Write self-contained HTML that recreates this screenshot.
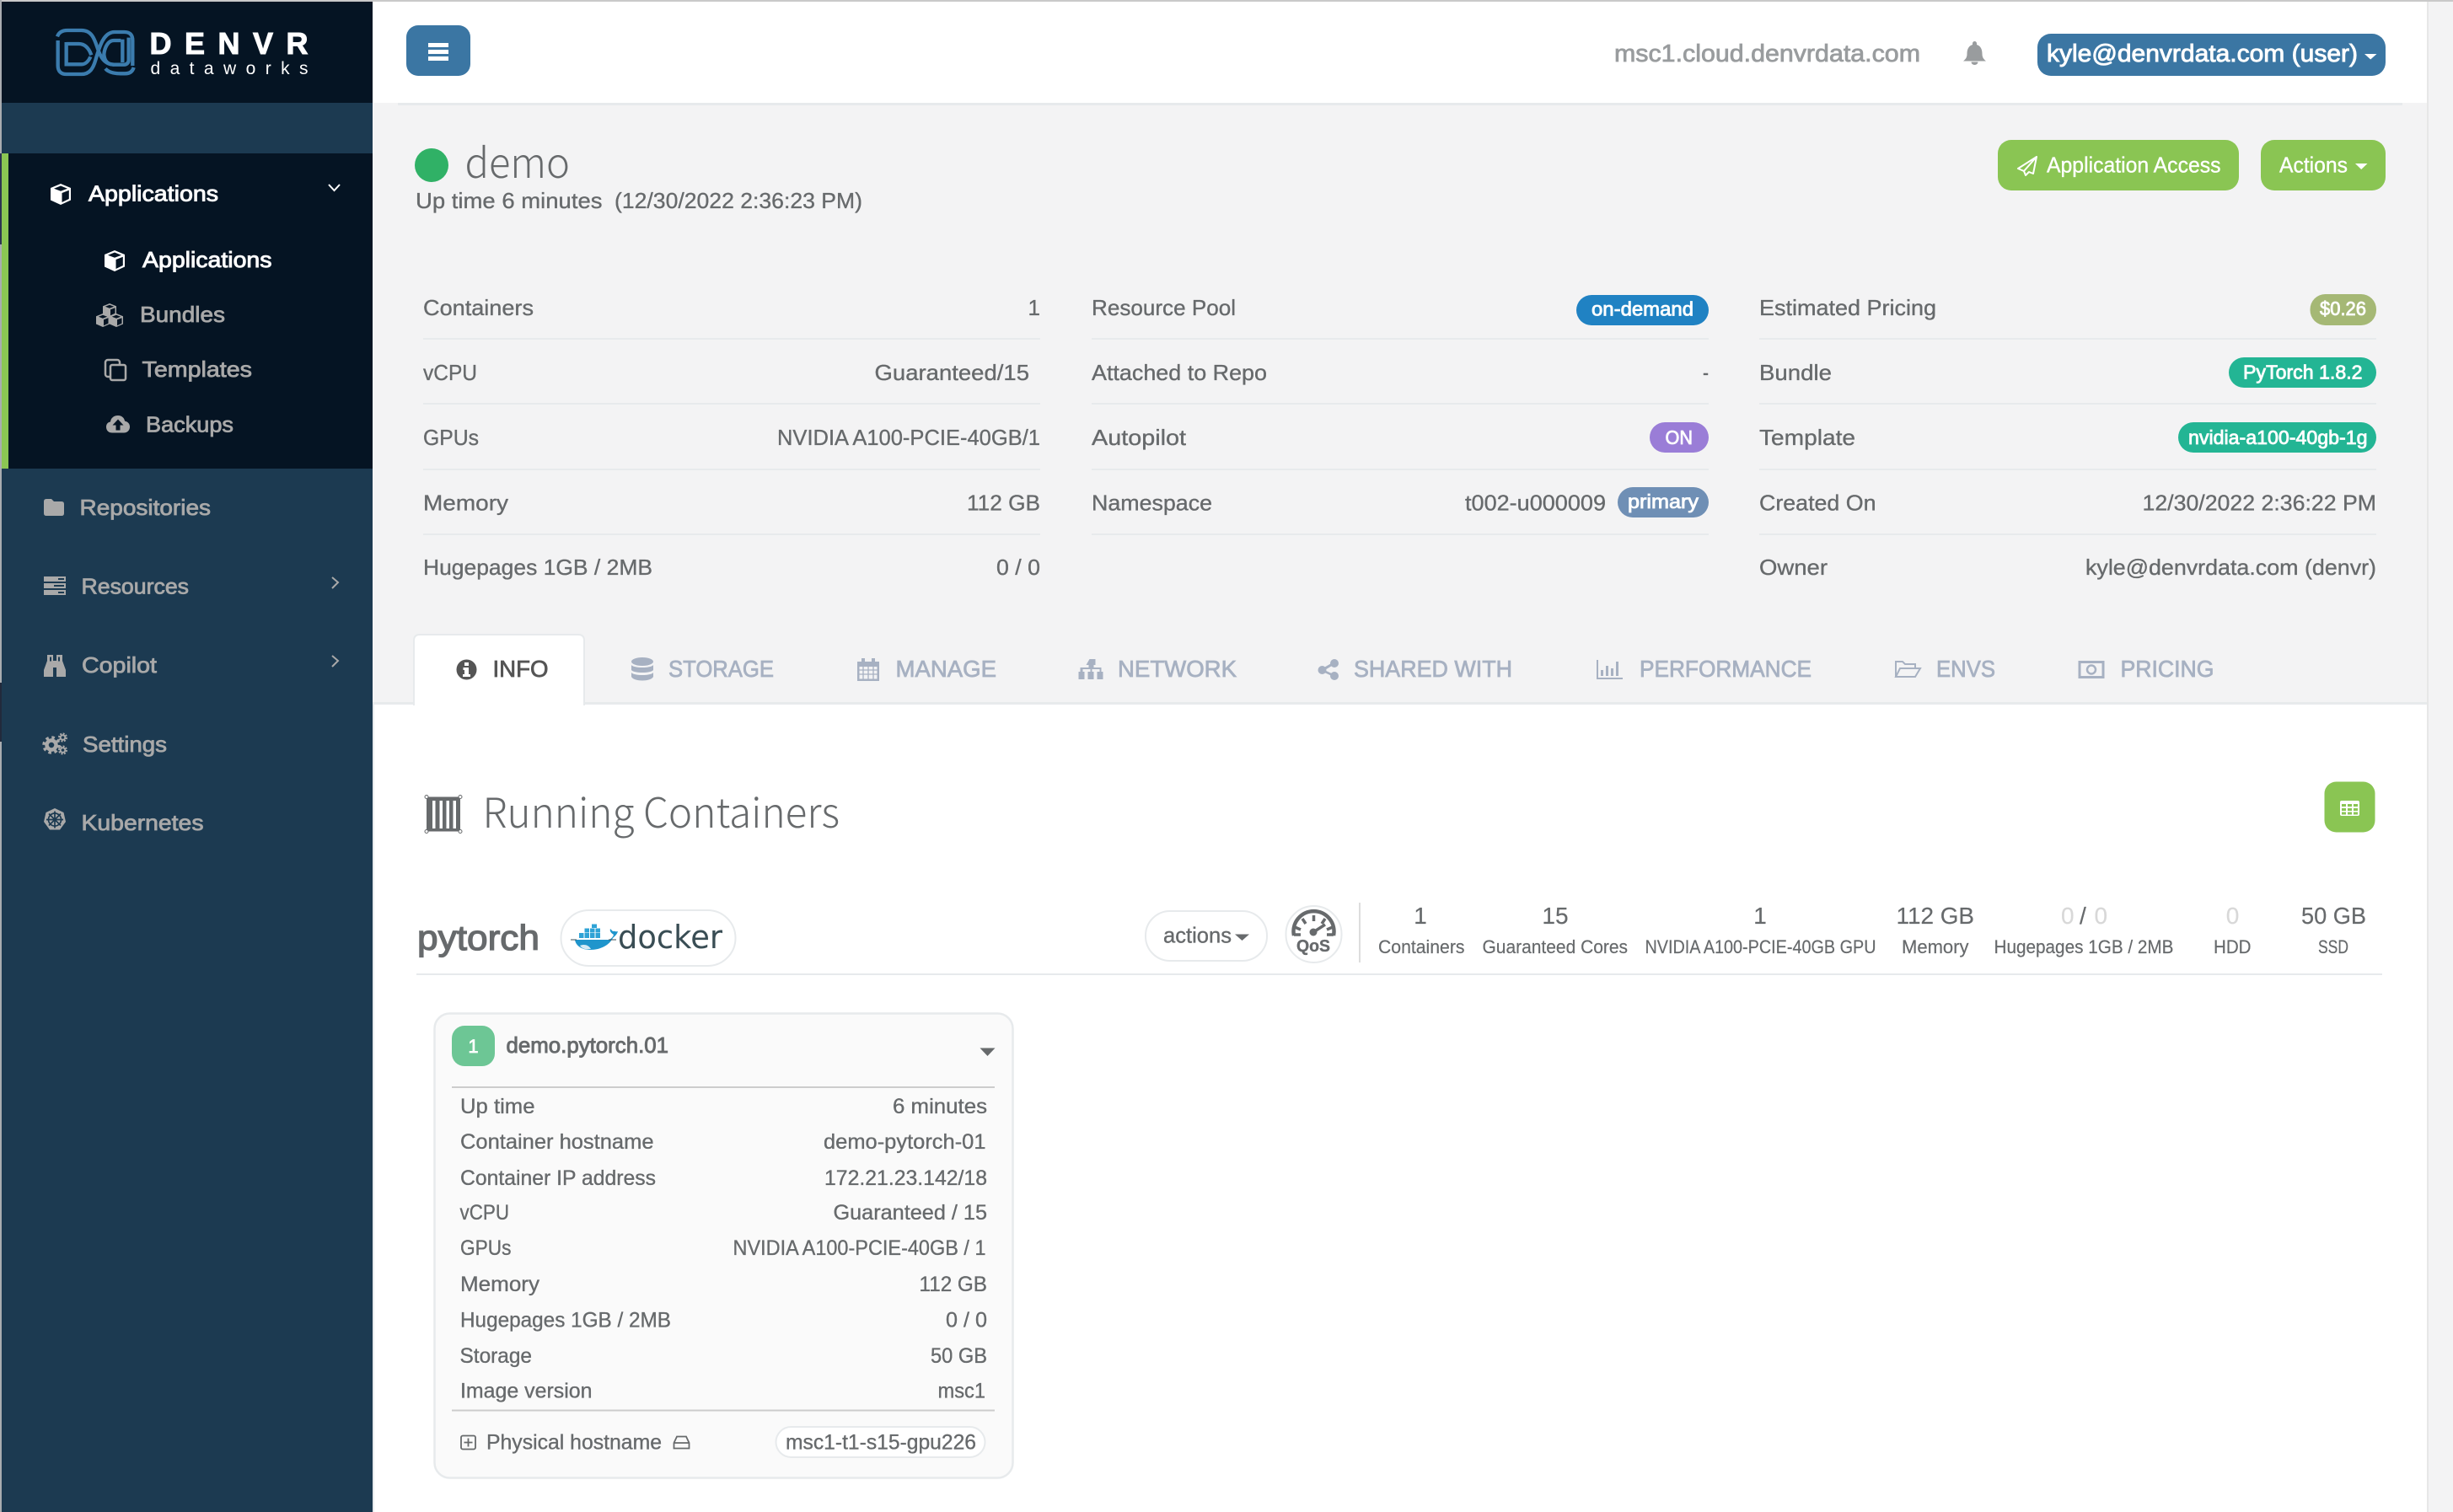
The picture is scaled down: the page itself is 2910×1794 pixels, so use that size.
<!DOCTYPE html>
<html><head><meta charset="utf-8"><title>demo</title>
<style>
html,body{margin:0;padding:0;background:#f3f3f4;width:2910px;height:1794px;overflow:hidden}
svg{display:block}
text{font-family:"Liberation Sans",sans-serif;font-size:26px;fill:#676a6c;stroke:#676a6c;stroke-width:.35px}
.w{fill:#fff;stroke:#fff;stroke-width:.9px}
.g{fill:#a9a9a9;stroke:#a9a9a9;stroke-width:.8px;font-size:26px}
.t{fill:#a7b1c2;stroke:#a7b1c2;stroke-width:.8px;font-size:28px}
.p{fill:#fff;stroke:#fff;stroke-width:.8px;font-size:23px}
.c{font-size:25px}
.l{font-size:22px;stroke-width:.2px}
.n{font-size:28px;stroke-width:.2px}
.z{fill:#d8d8d8;stroke:#d8d8d8}
.h{font-family:"Noto Sans CJK JP","Liberation Sans",sans-serif;font-weight:300;font-size:49px;fill:#676a6c;stroke:none}
</style></head><body>
<svg xmlns="http://www.w3.org/2000/svg" width="2910" height="1794" viewBox="0 0 2910 1794">
<defs>
<g id="cube"><path fill="#fff" d="M12 0L24 5V19.500L12 25L0 19.500V5Z"/><path fill="#051423" d="M12 2.500L20 5.700L12 8.800L4 5.700Z"/><path fill="#051423" d="M13.500 11L21.800 7.800V18L13.500 22Z"/></g>
<g id="cubeg"><path fill="#a9a9a9" d="M8 0L16 3.300V12.500L8 16L0 12.500V3.300Z"/><path fill="#051423" d="M8 1.700L13.200 3.800L8 5.800L2.800 3.800Z"/><path fill="#051423" d="M9 7.200L14.500 5.200V11.800L9 14.300Z"/></g>
</defs>
<!-- backgrounds -->
<rect width="2910" height="1794" fill="#f3f3f4"/>
<rect x="442" y="2" width="2438" height="120" fill="#fff"/>
<rect x="472" y="122" width="2378" height="3" fill="#e7eaec"/>
<rect x="2879" y="2" width="2" height="1792" fill="#e7e7e7"/>
<rect x="444" y="836" width="2435" height="958" fill="#fff"/>
<rect x="442" y="833" width="2437" height="3" fill="#e7eaec"/>
<rect x="442" y="836" width="2" height="958" fill="#e7eaec"/>
<rect y="0" width="2910" height="2" fill="#c9c9c9"/>
<rect y="0" width="2" height="1794" fill="#a9acb0"/>
<rect y="182" width="2" height="108" fill="#2c3450"/>
<rect y="810" width="2" height="70" fill="#222a3c"/>
<!-- sidebar -->
<rect x="2" y="2" width="440" height="1792" fill="#1c3a51"/>
<rect x="2" y="2" width="440" height="120" fill="#051423"/>
<rect x="2" y="182" width="440" height="374" fill="#051423"/>
<rect x="2" y="182" width="8" height="374" fill="#8bc653"/>
<!-- logo -->
<g transform="translate(60,28) scale(.3333)" fill="none" stroke="#3b7cae" stroke-width="13" stroke-linecap="butt">
<path d="M26 60V150C26 170 38 180 56 180H110C140 180 152 158 160 130C172 90 186 30 228 30H262C284 30 292 42 292 60V150"/>
<path d="M24 46C30 30 42 24 60 24H110C146 24 156 54 166 84C176 116 190 146 226 146H262C270 146 278 140 278 130V50"/>
<path d="M195 160C205 172 225 178 250 178H265C282 178 292 170 296 156"/>
<path d="M56 66V145H110C125 145 136 132 142 118"/>
<path d="M56 72H100C125 72 138 92 145 112"/>
<path d="M250 60H225C205 60 192 85 190 110C192 130 200 146 226 146"/>
<path d="M256 56V138"/>
</g>
<text x="177.500" y="64" textLength="188" lengthAdjust="spacing" style="font-size:36px;font-weight:700;fill:#fff;stroke:#fff;stroke-width:1px">DENVR</text>
<text x="178.500" y="88" textLength="187" lengthAdjust="spacing" style="font-size:21px;fill:#fff;stroke:none">dataworks</text>
<!-- sidebar items -->
<use href="#cube" x="60" y="218"/>
<text class="w" x="105" y="238.500" textLength="154" lengthAdjust="spacingAndGlyphs">Applications</text>
<path d="M390 219L396.500 226L403 219" fill="none" stroke="#fff" stroke-width="2"/>
<use href="#cube" x="124" y="297"/>
<text class="w" x="169" y="317" textLength="153.500" lengthAdjust="spacingAndGlyphs">Applications</text>
<use href="#cubeg" x="122" y="360"/><use href="#cubeg" x="114" y="372"/><use href="#cubeg" x="130" y="372"/>
<text class="g" x="166" y="382" textLength="101" lengthAdjust="spacingAndGlyphs">Bundles</text>
<rect x="125" y="427" width="17" height="20" rx="3" fill="none" stroke="#a9a9a9" stroke-width="2.500"/>
<rect x="131" y="433" width="18" height="18" rx="2" fill="#051423" stroke="#a9a9a9" stroke-width="2.500"/>
<text class="g" x="168.500" y="447" textLength="130.500" lengthAdjust="spacingAndGlyphs">Templates</text>
<path fill="#a9a9a9" d="M133 513.500C128 513.500 126 510 126 506.500C126 503 128 501 131 500.500C131.500 496 135 493 140 493C144.500 493 147.500 496 148 499.500C152 500.500 154 503 154 506.500C154 510.500 151 513.500 147 513.500Z"/>
<path fill="#051423" d="M140 497.500L146.500 504.500H142.500V510.500H137.500V504.500H133.500Z"/>
<text class="g" x="173" y="512.500" textLength="104" lengthAdjust="spacingAndGlyphs">Backups</text>
<path fill="#a9a9a9" d="M52 595Q52 592 55 592H61L64 595H73Q76 595 76 598V609Q76 612 73 612H55Q52 612 52 609Z"/>
<text class="g" x="94.500" y="611" textLength="155.500" lengthAdjust="spacingAndGlyphs">Repositories</text>
<g fill="#a9a9a9"><rect x="52" y="684" width="26" height="6"/><rect x="52" y="692" width="26" height="6"/><rect x="52" y="700" width="26" height="6"/></g>
<g fill="#1c3a51"><rect x="69" y="686" width="7" height="2"/><rect x="64" y="694" width="12" height="2"/><rect x="69" y="702" width="7" height="2"/></g>
<text class="g" x="96.500" y="704.500" textLength="127.500" lengthAdjust="spacingAndGlyphs">Resources</text>
<path d="M394 685L401 691L394 698" fill="none" stroke="#a9a9a9" stroke-width="2"/>
<path fill="#a9a9a9" d="M56 777H63V784H67V777H74V784L78 795V803H67V792H63V803H52V795L56 784Z"/>
<path fill="#1c3a51" d="M59 779.500h2v5h-2zM69 779.500h2v5h-2z"/>
<text class="g" x="97" y="798" textLength="89" lengthAdjust="spacingAndGlyphs">Copilot</text>
<path d="M394 778L401 784L394 791" fill="none" stroke="#a9a9a9" stroke-width="2"/>
<g fill="none" stroke="#a9a9a9">
<circle cx="61" cy="884" r="5.500" stroke-width="4.500"/><circle cx="61" cy="884" r="9" stroke-width="3.500" stroke-dasharray="3.500 3.570"/>
<circle cx="74.500" cy="875" r="2.800" stroke-width="2"/><circle cx="74.500" cy="875" r="4.500" stroke-width="2" stroke-dasharray="2 1.530"/>
<circle cx="74.500" cy="890" r="2.800" stroke-width="2"/><circle cx="74.500" cy="890" r="4.500" stroke-width="2" stroke-dasharray="2 1.530"/>
</g>
<text class="g" x="98" y="892" textLength="100" lengthAdjust="spacingAndGlyphs">Settings</text>
<path fill="#a9a9a9" d="M65 959L75.500 964L78 975L71 984.500H59L52 975L54.500 964Z"/>
<g fill="none" stroke="#1c3a51" stroke-width="1.700"><circle cx="65" cy="972.500" r="7.500"/><path d="M65 962.500V982.500M55 972.500H75M58 965.500L72 979.500M72 965.500L58 979.500"/></g>
<text class="g" x="96.500" y="985" textLength="145" lengthAdjust="spacingAndGlyphs">Kubernetes</text>
<!-- navbar -->
<rect x="482" y="30" width="76" height="60" rx="14" fill="#3b76a3"/>
<g fill="#fff"><rect x="508" y="51" width="24" height="5"/><rect x="508" y="59" width="24" height="5"/><rect x="508" y="67" width="24" height="5"/></g>
<text x="1915" y="73" textLength="363" lengthAdjust="spacingAndGlyphs" style="font-size:29px;fill:#999c9e;stroke:#999c9e;stroke-width:.8px">msc1.cloud.denvrdata.com</text>
<rect x="2417" y="40" width="413" height="50" rx="16" fill="#3b76a3"/>
<text class="w" x="2428" y="73" textLength="369" lengthAdjust="spacingAndGlyphs" style="font-size:29px">kyle@denvrdata.com (user)</text>
<path d="M2805 64H2819.500L2812.200 70.500Z" fill="#fff"/>
<!-- header -->
<circle cx="512" cy="196" r="20" fill="#30b166"/>
<text class="h" x="551.500" y="211" textLength="124.500" lengthAdjust="spacingAndGlyphs">demo</text>
<text x="493" y="247" textLength="221.500" lengthAdjust="spacingAndGlyphs">Up time 6 minutes</text>
<text x="729" y="247" textLength="294" lengthAdjust="spacingAndGlyphs">(12/30/2022 2:36:23 PM)</text>
<rect x="2370" y="166" width="286" height="60" rx="16" fill="#8ac553"/>
<path d="M2416 186L2394 200L2401 203L2403 208L2407 204L2412 206ZM2416 186L2401 203" fill="none" stroke="#fff" stroke-width="2" stroke-linejoin="round"/>
<text x="2428" y="204.500" textLength="206.500" lengthAdjust="spacingAndGlyphs" style="fill:#fff;stroke:#fff">Application Access</text>
<rect x="2682" y="166" width="148" height="60" rx="16" fill="#8ac553"/>
<text x="2704" y="204.500" textLength="81" lengthAdjust="spacingAndGlyphs" style="fill:#fff;stroke:#fff">Actions</text>
<path d="M2794 194H2808.500L2801.200 201Z" fill="#fff"/>
<!-- info table lines -->
<g fill="#e7eaec">
<rect x="502" y="401" width="732" height="2"/><rect x="502" y="478" width="732" height="2"/><rect x="502" y="556" width="732" height="2"/><rect x="502" y="633" width="732" height="2"/>
<rect x="1295" y="401" width="732" height="2"/><rect x="1295" y="478" width="732" height="2"/><rect x="1295" y="556" width="732" height="2"/><rect x="1295" y="633" width="732" height="2"/>
<rect x="2087" y="401" width="732" height="2"/><rect x="2087" y="478" width="732" height="2"/><rect x="2087" y="556" width="732" height="2"/><rect x="2087" y="633" width="732" height="2"/>
</g>
<text x="502" y="374" textLength="131" lengthAdjust="spacingAndGlyphs">Containers</text>
<text x="502" y="451" textLength="64" lengthAdjust="spacingAndGlyphs">vCPU</text>
<text x="502" y="528" textLength="66" lengthAdjust="spacingAndGlyphs">GPUs</text>
<text x="502" y="605.500" textLength="101" lengthAdjust="spacingAndGlyphs">Memory</text>
<text x="502" y="682" textLength="272" lengthAdjust="spacingAndGlyphs">Hugepages 1GB / 2MB</text>
<text x="1234" y="374" text-anchor="end">1</text>
<text x="1037.500" y="451" textLength="183.500" lengthAdjust="spacingAndGlyphs">Guaranteed/15</text>
<text x="922" y="528" textLength="312" lengthAdjust="spacingAndGlyphs">NVIDIA A100-PCIE-40GB/1</text>
<text x="1147" y="605.500" textLength="87" lengthAdjust="spacingAndGlyphs">112 GB</text>
<text x="1182" y="682" textLength="52" lengthAdjust="spacingAndGlyphs">0 / 0</text>
<text x="1295" y="374" textLength="171" lengthAdjust="spacingAndGlyphs">Resource Pool</text>
<text x="1295" y="451" textLength="208" lengthAdjust="spacingAndGlyphs">Attached to Repo</text>
<text x="1295" y="528" textLength="112" lengthAdjust="spacingAndGlyphs">Autopilot</text>
<text x="1295" y="605.500" textLength="143" lengthAdjust="spacingAndGlyphs">Namespace</text>
<rect x="1870" y="350" width="157" height="36" rx="18" fill="#2082c3"/>
<text class="p" x="1888" y="374.500" textLength="121" lengthAdjust="spacingAndGlyphs">on-demand</text>
<text x="2020" y="451" textLength="7" lengthAdjust="spacingAndGlyphs">-</text>
<rect x="1957" y="501" width="70" height="36" rx="18" fill="#9a7dd7"/>
<text class="p" x="1975.500" y="527" textLength="32.500" lengthAdjust="spacingAndGlyphs">ON</text>
<text x="1738" y="605.500" textLength="167" lengthAdjust="spacingAndGlyphs">t002-u000009</text>
<rect x="1919" y="578" width="108" height="36" rx="18" fill="#6f8fb5"/>
<text class="p" x="1931" y="603" textLength="84" lengthAdjust="spacingAndGlyphs">primary</text>
<text x="2087" y="374" textLength="210" lengthAdjust="spacingAndGlyphs">Estimated Pricing</text>
<text x="2087" y="451" textLength="86" lengthAdjust="spacingAndGlyphs">Bundle</text>
<text x="2087" y="528" textLength="114" lengthAdjust="spacingAndGlyphs">Template</text>
<text x="2087" y="605.500" textLength="138.500" lengthAdjust="spacingAndGlyphs">Created On</text>
<text x="2087" y="682" textLength="81" lengthAdjust="spacingAndGlyphs">Owner</text>
<rect x="2740.500" y="349" width="78.500" height="37" rx="18" fill="#a5b875"/>
<text class="p" x="2752" y="374" textLength="55" lengthAdjust="spacingAndGlyphs">$0.26</text>
<rect x="2644" y="424" width="175" height="36" rx="18" fill="#23b594"/>
<text class="p" x="2661" y="449.500" textLength="141.500" lengthAdjust="spacingAndGlyphs">PyTorch 1.8.2</text>
<rect x="2584" y="501" width="235" height="36" rx="18" fill="#23b594"/>
<text class="p" x="2596" y="527" textLength="212.500" lengthAdjust="spacingAndGlyphs">nvidia-a100-40gb-1g</text>
<text x="2541.500" y="605.500" textLength="277.500" lengthAdjust="spacingAndGlyphs">12/30/2022 2:36:22 PM</text>
<text x="2474" y="682" textLength="345" lengthAdjust="spacingAndGlyphs">kyle@denvrdata.com (denvr)</text>
<!-- tabs -->
<path d="M491 836V760Q491 753 498 753H686Q693 753 693 760V836Z" fill="#fff" stroke="#e7eaec" stroke-width="2"/>
<rect x="492" y="832" width="200" height="6" fill="#fff"/>
<circle cx="553.500" cy="794.500" r="12" fill="#555"/>
<path fill="#fff" d="M551 786h5v4h-5zM549.500 792h6.500v8h2v3h-9v-3h2v-5h-1.500z"/>
<text x="584.500" y="803" textLength="66" lengthAdjust="spacingAndGlyphs" style="font-size:28px;fill:#555;stroke:#555;stroke-width:.8px">INFO</text>
<g fill="#a7b1c2">
<ellipse cx="762" cy="785" rx="13" ry="5"/><path d="M749 789C752 793 772 793 775 789V795C772 799 752 799 749 795ZM749 798C752 802 772 802 775 798V803C772 809 752 809 749 803Z"/>
<path d="M1017 785H1022V781H1026V785H1034V781H1038V785H1043V808H1017ZM1019.500 791V805.500H1040.500V791Z"/><g stroke="#a7b1c2" stroke-width="1.300"><path d="M1019 795H1041M1019 800H1041M1024 791V806M1030 791V806M1036 791V806"/></g>
<path transform="translate(1.500,0)" d="M1291 782h7v7h-2v3h9v5h2v9h-7v-9h3v-3h-9v3h2v9h-7v-9h3v-3h-9v3h2v9h-7v-9h2v-5h10v-3h-3z"/>
<circle cx="1583" cy="787" r="5"/><circle cx="1568.500" cy="795" r="5"/><circle cx="1583" cy="802" r="5"/><path d="M1568 793.500L1582 785.500L1583.500 788L1570 796ZM1569 794L1583 800.500L1582 803L1568 796.500Z"/>
<path d="M1894 783h2v21h29v2h-31zM1899 795h3v7h-3zM1905 790h3v12h-3zM1911 793h3v9h-3zM1917 785h3v17h-3z"/>
</g>
<g fill="none" stroke="#a7b1c2" stroke-width="2">
<path d="M2249 803V785H2257L2260 788H2272V793M2249 803L2254 793H2278L2272 803Z"/>
<rect x="2467" y="785.500" width="28" height="18" stroke-width="3"/><circle cx="2481" cy="794.500" r="5" stroke-width="2.500"/>
</g>
<text class="t" x="793" y="803" textLength="125" lengthAdjust="spacingAndGlyphs">STORAGE</text>
<text class="t" x="1062.500" y="803" textLength="119.500" lengthAdjust="spacingAndGlyphs">MANAGE</text>
<text class="t" x="1326" y="803" textLength="141" lengthAdjust="spacingAndGlyphs">NETWORK</text>
<text class="t" x="1606" y="803" textLength="188" lengthAdjust="spacingAndGlyphs">SHARED WITH</text>
<text class="t" x="1945" y="803" textLength="204" lengthAdjust="spacingAndGlyphs">PERFORMANCE</text>
<text class="t" x="2297" y="803" textLength="70" lengthAdjust="spacingAndGlyphs">ENVS</text>
<text class="t" x="2515.500" y="803" textLength="111" lengthAdjust="spacingAndGlyphs">PRICING</text>
<!-- running containers -->
<rect x="506" y="945.500" width="40" height="41" fill="#676a6c"/>
<g fill="#fff"><rect x="513" y="950" width="3.500" height="33"/><rect x="521.500" y="950" width="3.500" height="33"/><rect x="529.500" y="950" width="3.500" height="33"/><rect x="537.500" y="950" width="3.500" height="33"/></g>
<g fill="#fff" stroke="#676a6c" stroke-width="1"><circle cx="506" cy="945.500" r="2"/><circle cx="546" cy="945.500" r="2"/><circle cx="506" cy="986.500" r="2"/><circle cx="546" cy="986.500" r="2"/></g>
<text class="h" x="572.500" y="982" textLength="423.500" lengthAdjust="spacingAndGlyphs">Running Containers</text>
<rect x="2757.500" y="927.500" width="60" height="60" rx="14" fill="#8ac553"/>
<rect x="2776" y="950" width="23" height="18" rx="2" fill="#fff"/>
<g fill="#8ac553"><rect x="2778" y="954" width="5" height="3"/><rect x="2785" y="954" width="5" height="3"/><rect x="2792" y="954" width="5" height="3"/><rect x="2778" y="959" width="5" height="3"/><rect x="2785" y="959" width="5" height="3"/><rect x="2792" y="959" width="5" height="3"/><rect x="2778" y="963.500" width="5" height="3"/><rect x="2785" y="963.500" width="5" height="3"/><rect x="2792" y="963.500" width="5" height="3"/></g>
<!-- pytorch row -->
<text x="495" y="1127" textLength="145" lengthAdjust="spacingAndGlyphs" style="font-size:42px;stroke:#676a6c;stroke-width:1.300px">pytorch</text>
<rect x="665.500" y="1080" width="207" height="66" rx="33" fill="#fff" stroke="#e7eaec" stroke-width="2"/>
<path fill="#1f95cc" d="M682 1115H722C725 1114 727 1112 728 1109C725 1107 723 1105 724 1102L727 1105C729 1104 730 1106 733 1105C732 1109 729 1111 727 1113C723 1121 713 1127 700 1127C690 1127 683 1122 682 1115Z"/>
<path fill="#d5eaf4" d="M688 1122C693 1120 698 1121 701 1126C695 1127 691 1126 688 1122Z"/>
<path stroke="#394d54" stroke-width="1" d="M677 1115H684M722 1115H731"/>
<g fill="#2fa3d6"><rect x="687" y="1107" width="5.500" height="6"/><rect x="693.500" y="1107" width="5.500" height="6"/><rect x="700" y="1107" width="5.500" height="6"/><rect x="706.500" y="1107" width="5.500" height="6"/><rect x="693.500" y="1101.500" width="5.500" height="5"/><rect x="700" y="1101.500" width="5.500" height="5"/><rect x="706.500" y="1101.500" width="5.500" height="5"/><rect x="702" y="1096.500" width="6" height="4.500"/></g>
<text x="733" y="1125" textLength="124" lengthAdjust="spacingAndGlyphs" style="font-family:'DejaVu Sans',sans-serif;font-size:38px;fill:#394d54;stroke:none">docker</text>
<rect x="494" y="1155" width="2332" height="2" fill="#e7eaec"/>
<rect x="1359" y="1081" width="144" height="59" rx="29" fill="#fff" stroke="#e7eaec" stroke-width="2"/>
<text x="1380" y="1118.500" textLength="81" lengthAdjust="spacingAndGlyphs">actions</text>
<path d="M1465 1108.500H1482L1473.500 1116Z" fill="#676a6c"/>
<rect x="1525.500" y="1075" width="66" height="67" rx="33" fill="#fff" stroke="#e7eaec" stroke-width="2"/>
<path d="M1535 1110A24 24 0 1 1 1582 1110" fill="none" stroke="#676a6c" stroke-width="4.500"/>
<path d="M1558.500 1086V1093M1545 1090L1549 1096M1572 1090L1568 1096M1536 1100L1543 1103M1581 1100L1574 1103M1535 1109H1543M1582 1109H1574" stroke="#676a6c" stroke-width="3.500" fill="none"/>
<circle cx="1558" cy="1106" r="4.500" fill="#676a6c"/><path d="M1558 1106L1572 1097" stroke="#676a6c" stroke-width="3.500"/>
<text x="1538" y="1129" textLength="40" lengthAdjust="spacingAndGlyphs" style="font-size:20px;font-weight:700">QoS</text>
<rect x="1612" y="1071" width="2" height="71" fill="#ddd"/>
<text class="n" x="1685" y="1096" text-anchor="middle">1</text>
<text class="n" x="1845" y="1096" text-anchor="middle">15</text>
<text class="n" x="2088" y="1096" text-anchor="middle">1</text>
<text class="n" x="2249.500" y="1096" textLength="92.500" lengthAdjust="spacingAndGlyphs">112 GB</text>
<text class="n z" x="2445" y="1096">0</text>
<text class="n" x="2467" y="1096">/</text>
<text class="n z" x="2484.500" y="1096">0</text>
<text class="n z" x="2648.500" y="1096" text-anchor="middle">0</text>
<text class="n" x="2730" y="1096" textLength="77" lengthAdjust="spacingAndGlyphs">50 GB</text>
<text class="l" x="1635" y="1131" textLength="102.500" lengthAdjust="spacingAndGlyphs">Containers</text>
<text class="l" x="1758.500" y="1131" textLength="172.500" lengthAdjust="spacingAndGlyphs">Guaranteed Cores</text>
<text class="l" x="1951.500" y="1131" textLength="274" lengthAdjust="spacingAndGlyphs">NVIDIA A100-PCIE-40GB GPU</text>
<text class="l" x="2256" y="1131" textLength="79.500" lengthAdjust="spacingAndGlyphs">Memory</text>
<text class="l" x="2365.500" y="1131" textLength="213" lengthAdjust="spacingAndGlyphs">Hugepages 1GB / 2MB</text>
<text class="l" x="2626" y="1131" textLength="44.500" lengthAdjust="spacingAndGlyphs">HDD</text>
<text class="l" x="2750" y="1131" textLength="36" lengthAdjust="spacingAndGlyphs">SSD</text>
<!-- card -->
<rect x="515.500" y="1202.500" width="686" height="551" rx="18" fill="#fafafa" stroke="#e7eaec" stroke-width="2.500"/>
<rect x="536" y="1217" width="51" height="48" rx="15" fill="#6dc695"/>
<text x="561.500" y="1249" text-anchor="middle" style="fill:#fff;font-size:22px;stroke:#fff;stroke-width:.7px">1</text>
<text x="600.500" y="1249" textLength="192.500" lengthAdjust="spacingAndGlyphs" style="font-size:26px;stroke:#676a6c;stroke-width:.9px">demo.pytorch.01</text>
<path d="M1162.500 1243.500H1180.500L1171.500 1253Z" fill="#676a6c"/>
<rect x="536" y="1289" width="644" height="2" fill="#ccc"/>
<rect x="536" y="1672.500" width="644" height="2" fill="#ccc"/>
<text class="c" x="546" y="1321" textLength="88.500" lengthAdjust="spacingAndGlyphs">Up time</text>
<text class="c" x="546" y="1363" textLength="229.500" lengthAdjust="spacingAndGlyphs">Container hostname</text>
<text class="c" x="546" y="1406" textLength="232" lengthAdjust="spacingAndGlyphs">Container IP address</text>
<text class="c" x="545.500" y="1447" textLength="58.500" lengthAdjust="spacingAndGlyphs">vCPU</text>
<text class="c" x="546" y="1489" textLength="60.500" lengthAdjust="spacingAndGlyphs">GPUs</text>
<text class="c" x="546" y="1532" textLength="94" lengthAdjust="spacingAndGlyphs">Memory</text>
<text class="c" x="546" y="1574.500" textLength="250" lengthAdjust="spacingAndGlyphs">Hugepages 1GB / 2MB</text>
<text class="c" x="545.500" y="1617" textLength="85.500" lengthAdjust="spacingAndGlyphs">Storage</text>
<text class="c" x="546" y="1658.500" textLength="156.500" lengthAdjust="spacingAndGlyphs">Image version</text>
<text class="c" x="1059" y="1321" textLength="112" lengthAdjust="spacingAndGlyphs">6 minutes</text>
<text class="c" x="977" y="1363" textLength="192.500" lengthAdjust="spacingAndGlyphs">demo-pytorch-01</text>
<text class="c" x="978" y="1406" textLength="193" lengthAdjust="spacingAndGlyphs">172.21.23.142/18</text>
<text class="c" x="988.500" y="1447" textLength="182.500" lengthAdjust="spacingAndGlyphs">Guaranteed / 15</text>
<text class="c" x="869.500" y="1489" textLength="300" lengthAdjust="spacingAndGlyphs">NVIDIA A100-PCIE-40GB / 1</text>
<text class="c" x="1090.500" y="1532" textLength="80.500" lengthAdjust="spacingAndGlyphs">112 GB</text>
<text class="c" x="1122" y="1574.500" textLength="49" lengthAdjust="spacingAndGlyphs">0 / 0</text>
<text class="c" x="1104" y="1617" textLength="67" lengthAdjust="spacingAndGlyphs">50 GB</text>
<text class="c" x="1112.500" y="1658.500" textLength="56.500" lengthAdjust="spacingAndGlyphs">msc1</text>
<rect x="547" y="1703.500" width="17" height="16" rx="2" fill="none" stroke="#676a6c" stroke-width="1.800"/>
<path d="M555.500 1706.500V1716.500M550.500 1711.500H560.500" stroke="#676a6c" stroke-width="1.800"/>
<text class="c" x="577" y="1719.500" textLength="208" lengthAdjust="spacingAndGlyphs">Physical hostname</text>
<path d="M799.500 1712L803 1704.500H814L817.500 1712V1718.500H799.500ZM799.500 1712H817.500" fill="none" stroke="#676a6c" stroke-width="1.800"/>
<rect x="920.500" y="1693" width="248" height="36" rx="18" fill="#fff" stroke="#e7eaec" stroke-width="2"/>
<text class="c" x="932" y="1719.500" textLength="226" lengthAdjust="spacingAndGlyphs">msc1-t1-s15-gpu226</text>
<!-- bell -->
<path fill="#999c9e" d="M2342.500 49a2.500 2.500 0 0 1 2.500 2.500V53C2350 54.500 2351.500 59 2351.500 64C2351.500 68 2353 70 2356 72.500H2329C2332 70 2333.500 68 2333.500 64C2333.500 59 2335 54.500 2340 53V51.500A2.500 2.500 0 0 1 2342.500 49ZM2338.500 73.500H2346.500A4 3.500 0 0 1 2338.500 73.500Z"/>
</svg>
</body></html>
